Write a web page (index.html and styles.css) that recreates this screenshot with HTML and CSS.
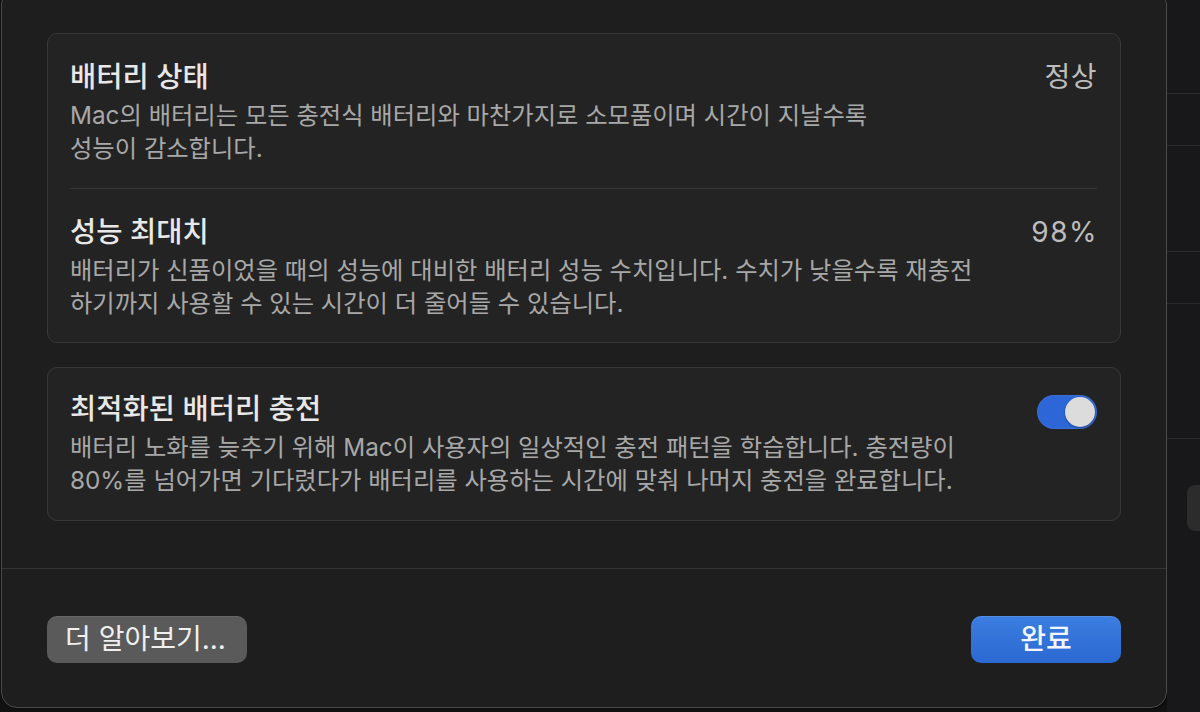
FILE: index.html
```html
<!DOCTYPE html>
<html lang="ko">
<head>
<meta charset="utf-8">
<title>배터리 상태</title>
<link rel="stylesheet" href="styles.css">
</head>
<body>
<div class="window">
  <div class="content">
    <section class="card">
      <div class="row row-first">
        <div class="text">
          <div class="title">배터리 상태</div>
          <p class="desc">Mac의 배터리는 모든 충전식 배터리와 마찬가지로 소모품이며 시간이 지날수록<br>성능이 감소합니다.</p>
        </div>
        <div class="value">정상</div>
      </div>
      <div class="sep"></div>
      <div class="row row-second">
        <div class="text">
          <div class="title">성능 최대치</div>
          <p class="desc">배터리가 신품이었을 때의 성능에 대비한 배터리 성능 수치입니다. 수치가 낮을수록 재충전<br>하기까지 사용할 수 있는 시간이 더 줄어들 수 있습니다.</p>
        </div>
        <div class="value value-num">98%</div>
      </div>
    </section>
    <section class="card card-toggle">
      <div class="row row-toggle">
        <div class="text">
          <div class="title">최적화된 배터리 충전</div>
          <p class="desc">배터리 노화를 늦추기 위해 Mac이 사용자의 일상적인 충전 패턴을 학습합니다. 충전량이<br>80%를 넘어가면 기다렸다가 배터리를 사용하는 시간에 맞춰 나머지 충전을 완료합니다.</p>
        </div>
        <div class="toggle"><span class="knob"></span></div>
      </div>
    </section>
  </div>
  <div class="footer">
    <button class="btn btn-secondary">더 알아보기...</button>
    <button class="btn btn-primary">완료</button>
  </div>
</div>
<div class="side">
  <div class="band band-a"></div>
  <div class="band band-b"></div>
  <div class="band band-c"></div>
  <div class="band band-b"></div>
  <div class="band band-d"></div>
  <div class="gap"></div>
  <div class="pill"></div>
</div>
</body>
</html>
```
FILE: styles.css
```css
* { box-sizing: border-box; }

html, body {
  margin: 0;
  padding: 0;
}

body {
  width: 1200px;
  height: 712px;
  overflow: hidden;
  background: #111112;
  display: flex;
  align-items: flex-start;
  font-family: "Inter", "Noto Sans CJK KR", sans-serif;
  color: #e6e6e6;
}

.window {
  flex: none;
  margin-top: -12px;
  margin-left: 1px;
  width: 1166px;
  height: 720px;
  background: #1e1e1e;
  border: 1px solid #4b4b4b;
  border-radius: 16px;
  display: flex;
  flex-direction: column;
  box-shadow: 1px 0 2px rgba(0, 0, 0, 0.8);
}

.content {
  flex: 1;
  padding: 44px 45px 0 45px;
  display: flex;
  flex-direction: column;
  gap: 24px;
}

.card {
  background: #232323;
  border: 1px solid #383838;
  border-radius: 10px;
  padding: 0 23px 0 22px;
}

.row {
  display: flex;
  justify-content: space-between;
  align-items: flex-start;
}

.row-first { padding: 26px 0 23px; }
.row-second { padding: 26px 0 22px; }
.row-toggle { padding: 24px 0 23px; }

.title {
  font-size: 28.5px;
  line-height: 34px;
  font-weight: 500;
  color: #e8e8e8;
  white-space: nowrap;
}

.desc {
  margin: 5px 0 0;
  font-size: 24.3px;
  line-height: 33px;
  color: #a8a8a8;
  white-space: nowrap;
}

.value {
  font-size: 28px;
  line-height: 34px;
  color: #bdbdbd;
  white-space: nowrap;
  letter-spacing: 0.5px;
}

.value-num {
  letter-spacing: 1.5px;
  margin-right: -1px;
}

.sep {
  height: 1px;
  background: #353535;
}

.toggle {
  margin-top: 3px;
  width: 60px;
  height: 34px;
  border-radius: 17px;
  background: #2d66d6;
  display: flex;
  align-items: center;
  justify-content: flex-end;
  padding-right: 2px;
  box-shadow: inset 0 0 0 1px rgba(255, 255, 255, 0.06);
}

.knob {
  width: 30px;
  height: 30px;
  border-radius: 50%;
  background: #dcdcdc;
  box-shadow: 0 1px 2px rgba(0, 0, 0, 0.35);
}

.footer {
  flex: none;
  height: 139px;
  border-top: 1px solid #353535;
  padding: 47px 45px 0 45px;
  display: flex;
  justify-content: space-between;
  align-items: flex-start;
}

.btn {
  height: 47px;
  border: none;
  border-radius: 10px;
  font-family: "Inter", "Noto Sans CJK KR", sans-serif;
  font-size: 28px;
  line-height: 47px;
  padding: 0;
  cursor: default;
}

.btn-secondary {
  width: 200px;
  background: #5a5a5a;
  color: #f0f0f0;
  text-align: left;
  padding-left: 18px;
  box-shadow: inset 0 1px 0 rgba(255, 255, 255, 0.08);
}

.btn-primary {
  width: 150px;
  background: linear-gradient(#3b7de0, #2b69d2);
  color: #f4f7ff;
  font-weight: 500;
  box-shadow: inset 0 1px 0 rgba(255, 255, 255, 0.12);
}

.side {
  flex: 1;
  height: 712px;
  background: #18181a;
  display: flex;
  flex-direction: column;
}

.band {
  border-bottom: 1px solid #2a2a2d;
}

.band-a { height: 94px; }
.band-b { height: 52px; }
.band-c { height: 106px; }
.band-d { height: 135px; }

.gap { height: 46px; }

.pill {
  height: 46px;
  margin-left: 20px;
  background: #2c2c2c;
  border-radius: 8px 0 0 8px;
}
```
